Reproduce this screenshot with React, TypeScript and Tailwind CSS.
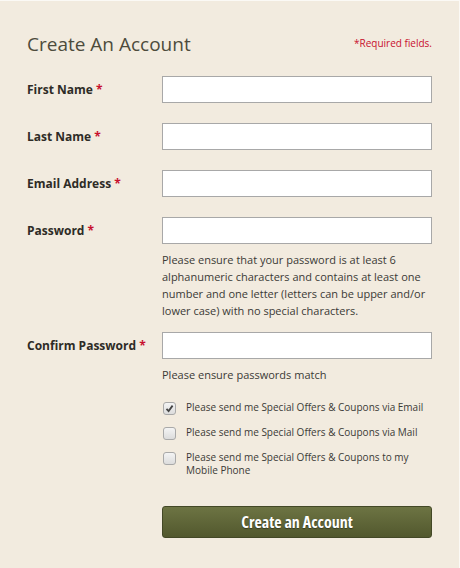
import React, { useState } from 'react';

const fields = [
  { label: 'First Name', type: 'text' },
  { label: 'Last Name', type: 'text' },
  { label: 'Email Address', type: 'email' },
  { label: 'Password', type: 'password' },
];

const offers = [
  { id: 'email', text: 'Please send me Special Offers & Coupons via Email' },
  { id: 'mail', text: 'Please send me Special Offers & Coupons via Mail' },
  { id: 'mobile', text: 'Please send me Special Offers & Coupons to my Mobile Phone' },
];

function Label({ text }: { text: string }) {
  return (
    <label className="text-[12px] font-bold text-[#2e2b26] leading-[27px]">
      {text} <span className="text-[#c8102e]">*</span>
    </label>
  );
}

function Input({ type }: { type: string }) {
  return <input type={type} className="w-[270px] h-[27px] bg-white border border-[#a8a8a8] outline-none px-2 text-[12px]" />;
}

export default function App() {
  const [checks, setChecks] = useState<Record<string, boolean>>({ email: true, mail: false, mobile: false });

  return (
    <div className="w-[460px] h-[568px] bg-[#f2ebdf] border-t border-r border-[#fbf9f5] pl-[27px] pr-[27px] pt-[30px] font-['Open_Sans',sans-serif]">
      {/* HEADER */}
      <div className="flex items-center justify-between">
        <h1 className="text-[19px] text-[#4d4b3c] leading-[26px]">Create An Account</h1>
        <span className="text-[10px] text-[#c8102e] -mt-[2px]">*Required fields.</span>
      </div>

      {/* CAMPOS */}
      <div className="mt-[19px] flex flex-col gap-[20px]">
        {fields.map((f) => (
          <div key={f.label} className="flex">
            <div className="w-[137px]">
              <Label text={f.label} />
            </div>
            <div>
              <Input type={f.type} />
              {f.label === 'Password' && (
                <p className="w-[270px] mt-[7px] text-[11px] leading-[17px] text-[#3b3a36]">
                  Please ensure that your password is at least 6 alphanumeric characters and contains at least one number and one letter (letters can be upper and/or lower case) with no special characters.
                </p>
              )}
            </div>
          </div>
        ))}
      </div>

      <div className="mt-[13px] flex">
        <div className="w-[137px]">
          <Label text="Confirm Password" />
        </div>
        <div>
          <Input type="password" />
          <p className="mt-[7px] text-[11px] leading-[17px] text-[#3b3a36]">Please ensure passwords match</p>

          {/* CHECKBOXES */}
          <div className="mt-[18px] flex flex-col gap-[11px]">
            {offers.map((o) => (
              <label key={o.id} className="flex items-start gap-[10px] cursor-pointer">
                <span
                  onClick={() => setChecks({ ...checks, [o.id]: !checks[o.id] })}
                  className="mt-[1px] ml-[1px] w-[13px] h-[13px] shrink-0 rounded-[3px] border border-[#a9a9a9] bg-gradient-to-b from-[#f4f4f4] to-[#dcdcdc] flex items-center justify-center"
                >
                  {checks[o.id] && (
                    <svg width="9" height="9" viewBox="0 0 9 9">
                      <path d="M1.5 4.8 L3.6 7 L7.6 1.6" fill="none" stroke="#444" strokeWidth="1.8" />
                    </svg>
                  )}
                </span>
                <span className="text-[10px] leading-[13px] text-[#3b3a36] w-[240px]">{o.text}</span>
              </label>
            ))}
          </div>

          <button className="mt-[29px] w-[270px] h-[32px] rounded-[3px] border border-[#434826] bg-gradient-to-b from-[#6d7443] to-[#52582e] text-white text-[16px] font-bold font-stretch-condensed [text-shadow:0_1px_1px_rgba(0,0,0,0.4)]">
            Create an Account
          </button>
        </div>
      </div>
    </div>
  );
}
